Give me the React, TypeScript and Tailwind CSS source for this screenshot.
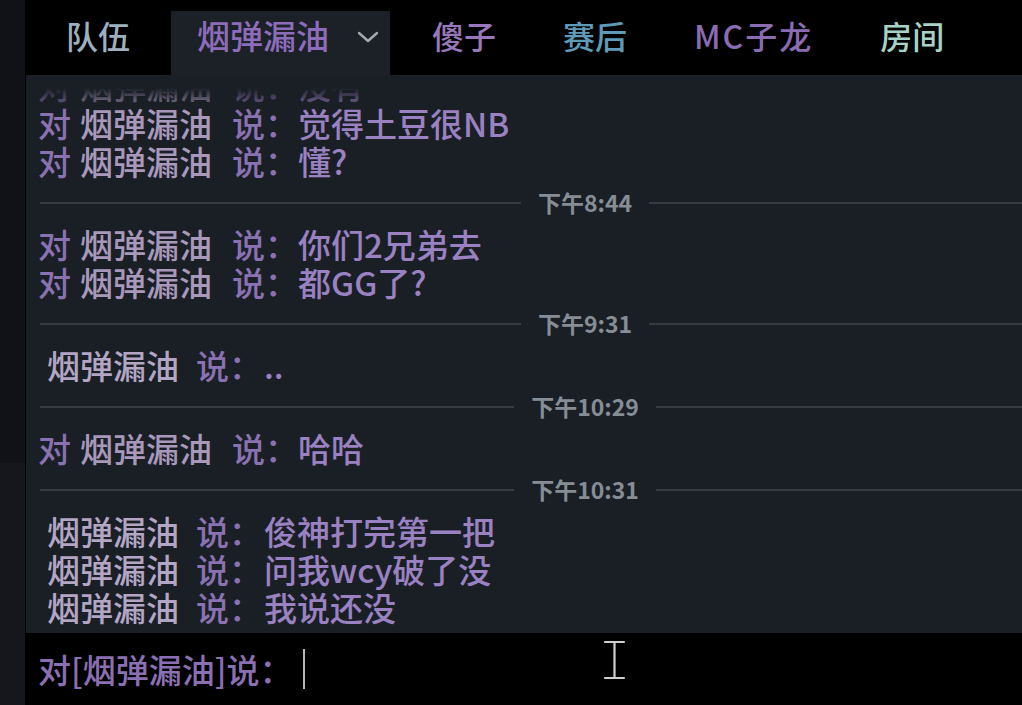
import React from "react";

type Msg = { to: boolean; text: string; faded?: boolean };
type Item = { kind: "msg"; msg: Msg } | { kind: "time"; label: string };

const items: Item[] = [
  { kind: "msg", msg: { to: true, text: "没有", faded: true } },
  { kind: "msg", msg: { to: true, text: "觉得土豆很NB" } },
  { kind: "msg", msg: { to: true, text: "懂?" } },
  { kind: "time", label: "下午8:44" },
  { kind: "msg", msg: { to: true, text: "你们2兄弟去" } },
  { kind: "msg", msg: { to: true, text: "都GG了?" } },
  { kind: "time", label: "下午9:31" },
  { kind: "msg", msg: { to: false, text: ".." } },
  { kind: "time", label: "下午10:29" },
  { kind: "msg", msg: { to: true, text: "哈哈" } },
  { kind: "time", label: "下午10:31" },
  { kind: "msg", msg: { to: false, text: "俊神打完第一把" } },
  { kind: "msg", msg: { to: false, text: "问我wcy破了没" } },
  { kind: "msg", msg: { to: false, text: "我说还没" } },
];

function ChatLine({ msg }: { msg: Msg }) {
  return (
    <div
      className={`h-[38px] flex items-center whitespace-nowrap ${msg.to ? "pl-[12px]" : "pl-[21px]"} ${msg.faded ? "opacity-50" : ""}`}
    >
      {msg.to && <span className="text-[#8a72b2]">对</span>}
      <span className={msg.to ? "ml-[9px] text-[#a898ba]" : "text-[#b2a6c4]"}>烟弹漏油</span>
      <span className={`${msg.to ? "ml-[20px]" : "ml-[17px]"} text-[#8a72b2]`}>说：</span>
      <span className={`${msg.to ? "" : "ml-[2px]"} text-[#9a82c2]`}>{msg.text}</span>
    </div>
  );
}

function TimeDivider({ label }: { label: string }) {
  return (
    <div className="h-[45px] flex items-center ml-[14px] w-[1090px] shrink-0">
      <div className="flex-1 h-[2px] bg-[#363c44]" />
      <span className="px-[17px] text-[23px] font-bold text-[#868d95] leading-none">{label}</span>
      <div className="flex-1 h-[2px] bg-[#363c44]" />
    </div>
  );
}

function Tab({ label, color, className = "" }: { label: string; color: string; className?: string }) {
  return (
    <div className={`h-[64px] flex items-center pb-[16px] ${className}`}>
      <span className={color}>{label}</span>
    </div>
  );
}

export default function App() {
  return (
    <div className="w-[1022px] h-[705px] flex overflow-hidden bg-black font-['Noto_Sans_CJK_SC','Noto_Sans',sans-serif] font-medium">
      {/* left edge */}
      <div className="w-[26px] flex flex-col border-r border-black">
        <div className="h-[463px] bg-[#101217]" />
        <div className="flex-1 bg-[#16171d]" />
      </div>

      <div className="flex-1 flex flex-col min-w-0">
        {/* tabs */}
        <header className="h-[75px] bg-black flex items-end text-[32px] leading-none">
          <Tab label="队伍" color="text-[#9db0bf]" className="w-[145px] pl-[40px]" />
          <div className="w-[219px] h-[64px] bg-[#1c2027] flex items-center pl-[26px] pb-[16px]">
            <span className="text-[#8d6dbb] text-[33px]">烟弹漏油</span>
            <svg className="ml-[28px] mt-[4px]" width="22" height="14" viewBox="0 0 22 14" fill="none">
              <path d="M2 3 L11 11 L20 3" stroke="#a3a9b0" strokeWidth="2.4" strokeLinecap="round" strokeLinejoin="round" />
            </svg>
          </div>
          <div className="flex gap-[67px] ml-[42px]">
            <Tab label="傻子" color="text-[#9878ba]" />
            <Tab label="赛后" color="text-[#5e9bb8]" />
            <Tab label="MC子龙" color="text-[#8a6cb3] tracking-[2px]" />
            <Tab label="房间" color="text-[#a7d3c7]" />
          </div>
        </header>

        {/* messages */}
        <main className="relative flex-1 bg-[#1a1f26] overflow-hidden text-[33px] leading-none">
          <div className="flex flex-col -mt-[9px]">
            {items.map((it, i) =>
              it.kind === "msg" ? <ChatLine key={i} msg={it.msg} /> : <TimeDivider key={i} label={it.label} />
            )}
          </div>
          <div className="absolute inset-x-0 top-0 h-[13px] bg-[#1a1f26]" />
          <div className="absolute inset-x-0 top-[13px] h-[12px] bg-gradient-to-b from-[#1a1f26] to-transparent" />
        </main>

        {/* input */}
        <footer className="relative h-[72px] bg-black flex items-center pl-[12px] text-[33px] leading-none">
          <span className="text-[#8a70b2] whitespace-nowrap">对[烟弹漏油]说：</span>
          <span className="ml-[10px] w-[2px] h-[40px] bg-[#b5b5b5]" />
          <svg className="absolute left-[578px] top-[7px]" width="22" height="42" viewBox="0 0 22 42" fill="none">
            <path d="M1 2 H20 M10.5 2 V38 M1 38 H20" stroke="#cfcfcf" strokeWidth="2.2" strokeLinecap="round" />
          </svg>
        </footer>
      </div>
    </div>
  );
}
